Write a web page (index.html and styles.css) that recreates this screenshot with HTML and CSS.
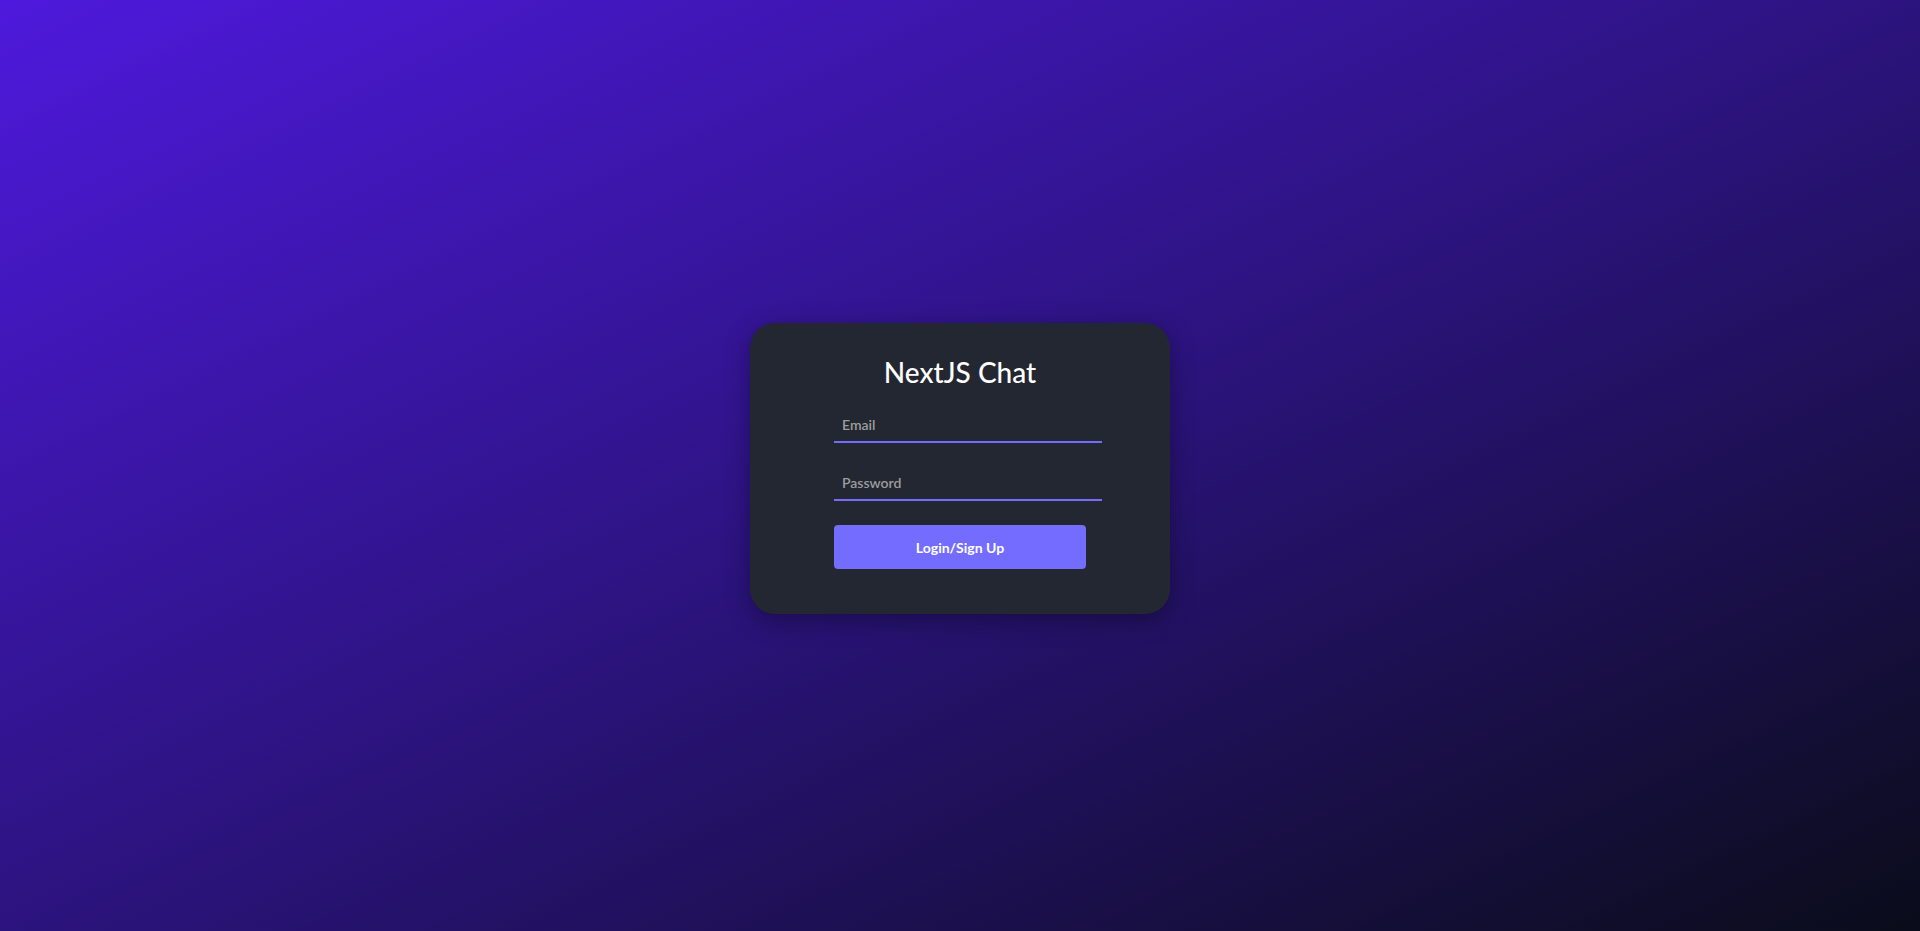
FILE: index.html
```html
<!DOCTYPE html>
<html lang="en">
<head>
<meta charset="utf-8">
<title>NextJS Chat</title>
<link rel="stylesheet" href="styles.css">
</head>
<body>
<main class="page">
  <section class="card">
    <h1 class="title">NextJS Chat</h1>
    <form class="form">
      <input class="field" type="email" placeholder="Email">
      <input class="field" type="password" placeholder="Password">
      <button class="btn" type="button">Login/Sign Up</button>
    </form>
  </section>
</main>
</body>
</html>
```

FILE: styles.css
```css
* { box-sizing: border-box; }
html, body { margin: 0; height: 100%; }
body {
  font-family: "Lato", "Noto Sans", sans-serif;
  background: linear-gradient(to bottom right, #4e19dc 0%, #2f1488 45%, #0a0c1a 100%);
}
.page {
  height: 931px;
  display: flex;
  align-items: center;
  justify-content: center;
}
.card {
  width: 420px;
  height: 291px;
  margin-top: 6px;
  background: #232731;
  border-radius: 25px;
  box-shadow: 0 6px 24px rgba(0, 0, 0, 0.35);
  padding: 32px 0 0 0;
}
.title {
  margin: 0;
  text-align: center;
  color: #ffffff;
  font-size: 28px;
  font-weight: 500;
  line-height: 34px;
}
.form {
  margin: 18px 0 0 84px;
  width: 268px;
  display: flex;
  flex-direction: column;
  align-items: flex-start;
}
.field {
  width: 268px;
  height: 36px;
  background: transparent;
  border: none;
  border-bottom: 2px solid #736cff;
  color: #ffffff;
  font-family: inherit;
  font-size: 14px;
  padding: 0 8px;
  outline: none;
  margin-bottom: 22px;
}
.field::placeholder { color: #9d9d9d; font-weight: 600; }
.btn {
  margin-top: 2px;
  width: 252px;
  height: 44px;
  border: none;
  border-radius: 4px;
  background: #736cff;
  color: #ffffff;
  font-family: inherit;
  font-weight: 700;
  font-size: 14px;
}
```
